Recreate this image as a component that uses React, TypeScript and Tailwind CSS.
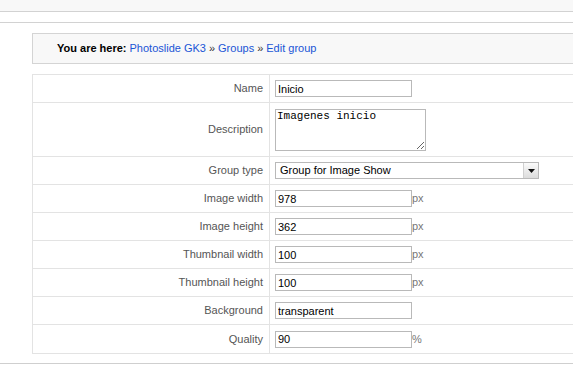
import React from 'react'

const rows: { label: string; kind: 'text' | 'area' | 'select'; value: string; unit?: string }[] = [
  { label: 'Name', kind: 'text', value: 'Inicio' },
  { label: 'Description', kind: 'area', value: 'Imagenes inicio' },
  { label: 'Group type', kind: 'select', value: 'Group for Image Show' },
  { label: 'Image width', kind: 'text', value: '978', unit: 'px' },
  { label: 'Image height', kind: 'text', value: '362', unit: 'px' },
  { label: 'Thumbnail width', kind: 'text', value: '100', unit: 'px' },
  { label: 'Thumbnail height', kind: 'text', value: '100', unit: 'px' },
  { label: 'Background', kind: 'text', value: 'transparent' },
  { label: 'Quality', kind: 'text', value: '90', unit: '%' },
]

function Field({ row }: { row: (typeof rows)[number] }) {
  if (row.kind === 'area') {
    return (
      <textarea
        defaultValue={row.value}
        className="w-[151px] h-[42px] border border-[#b9b9b9] bg-white px-[1px] py-0 text-[11px] leading-[13px] text-black font-['Liberation_Mono',monospace] outline-none"
      />
    )
  }
  if (row.kind === 'select') {
    return (
      <div className="flex items-center w-[264px] h-[17px] border border-[#b9b9b9] bg-white">
        <span className="flex-1 pl-[4px] text-[11px] leading-[15px] text-black">{row.value}</span>
        <span className="flex items-center justify-center w-[15px] h-[15px] border-l border-[#d0d0d0] bg-gradient-to-b from-[#fbfbfb] to-[#dcdcdc]">
          <svg width="7" height="4" viewBox="0 0 7 4"><path d="M0 0h7L3.5 4z" fill="#111" /></svg>
        </span>
      </div>
    )
  }
  return (
    <div className="flex items-center">
      <input
        defaultValue={row.value}
        className="w-[137px] h-[17px] border border-[#b9b9b9] bg-white px-[2px] text-[11px] leading-[15px] text-black outline-none"
      />
      {row.unit && <span className="text-[11px] text-[#777]">{row.unit}</span>}
    </div>
  )
}

export default function App() {
  return (
    <div className="w-[573px] h-[370px] overflow-hidden bg-white font-['Liberation_Sans',Arial,sans-serif]">
      <div className="h-[12px] bg-[#f8f8f8] border-b border-[#d2d2d2]" />
      <div className="h-[11px] border-b border-[#d2d2d2]" />

      <div className="pl-[32px] pt-[10px]">
        {/* Breadcrumb */}
        <div className="flex items-center h-[31px] pl-[24px] border border-r-0 border-[#d4d4d4] bg-[#f8f8f8] text-[11px]">
          <span className="font-bold text-black">You are here:</span>
          <span className="ml-[3px] text-[#1a55d6]">Photoslide GK3</span>
          <span className="mx-[3px] text-[#333]">»</span>
          <span className="text-[#1a55d6]">Groups</span>
          <span className="mx-[3px] text-[#333]">»</span>
          <span className="text-[#1a55d6]">Edit group</span>
        </div>

        {/* Form table */}
        <div className="mt-[10px] border border-r-0 border-[#e3e3e3]">
          {rows.map((row, i) => (
            <div
              key={row.label}
              className={`flex ${row.kind === 'area' ? 'h-[54px]' : 'h-[28px]'} ${i < rows.length - 1 ? 'border-b border-[#e3e3e3]' : 'h-[27px]'}`}
            >
              <div className="w-[237px] shrink-0 flex items-center justify-end pr-[6px] border-r border-[#e3e3e3] text-[11px] text-[#555]">
                {row.label}
              </div>
              <div className={`flex pl-[5px] ${row.kind === 'area' ? 'items-start pt-[6px]' : 'items-center'}`}>
                <Field row={row} />
              </div>
            </div>
          ))}
        </div>
      </div>

      <div className="mt-[9px] border-b border-[#cfcfcf]" />
    </div>
  )
}
